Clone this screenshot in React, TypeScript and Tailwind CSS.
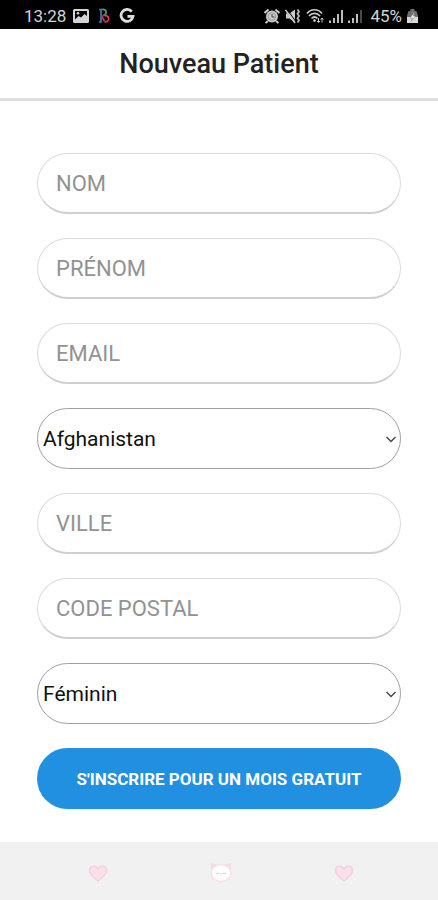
import { useState } from "react";

const fieldBase =
  "block w-full h-[61px] rounded-full border bg-white leading-7 outline-none";

function PictureIcon() {
  return (
    <svg className="w-4 h-4" viewBox="0 0 16 16" aria-hidden="true">
      <path
        fill="#d4d4d4"
        fillRule="evenodd"
        d="M1.500 1h13A1.500 1.500 0 0 1 16 2.500v11a1.500 1.500 0 0 1-1.500 1.500h-13A1.500 1.500 0 0 1 0 13.500v-11A1.500 1.500 0 0 1 1.500 1ZM2 3v8.500l3.500-3.500 2.500 1.500 3.500-3.500 2.500 2V3H2Z"
      />
      <circle cx="5" cy="5.200" r="1.300" fill="#d4d4d4" />
    </svg>
  );
}

function BrandIcon() {
  return (
    <svg className="w-3 h-4" viewBox="0 0 12 16" fill="none" strokeWidth="1.700" aria-hidden="true">
      <path d="M1 1.500h2V14H1" stroke="#3f7fa8" />
      <path d="M3.500 1.500c5.500-1 6 4.500 2 6" stroke="#45a06a" />
      <path d="M5 7.500c6.500-1 8 6.500 1.500 6.700" stroke="#d83a58" />
      <path d="M3.500 7.500l3 6" stroke="#b83a62" />
    </svg>
  );
}

function GoogleIcon() {
  return (
    <svg className="w-4 h-4" viewBox="0 0 16 16" fill="none" aria-hidden="true">
      <path d="M12.800 3.700A6 6 0 1 0 14 8.300H8.500" stroke="#dedede" strokeWidth="2.800" />
    </svg>
  );
}

function AlarmIcon() {
  return (
    <svg className="w-4 h-4" viewBox="0 0 16 16" aria-hidden="true">
      <circle cx="8" cy="8.500" r="6" fill="#c9c9c9" />
      <path
        d="M.500 5 4.500 1.500M15.500 5l-4-3.500M4 13l-2.500 2M12 13l2.500 2"
        stroke="#c9c9c9"
        strokeWidth="2"
      />
      <circle cx="8" cy="8.500" r="3.800" fill="none" stroke="#999" />
      <path d="M8 6v3h2.500" fill="none" stroke="#444" />
    </svg>
  );
}

function MuteIcon() {
  return (
    <svg className="w-4 h-4" viewBox="0 0 16 16" aria-hidden="true">
      <path d="M1 5.500h3.500L10 1.500v13l-5.500-4H1Z" fill="#c9c9c9" />
      <path d="M2 1l9 13" stroke="#000" strokeWidth="1" />
      <path d="M.500 2l9.500 13" stroke="#c9c9c9" strokeWidth="1.500" />
      <path
        d="M12.500 1.500l1.500 2-1.500 2.300 1.500 2.200-1.500 2.300 1.500 2.200-1.500 2"
        fill="none"
        stroke="#b5b5b5"
        strokeWidth="1.800"
      />
    </svg>
  );
}

function WifiIcon() {
  return (
    <svg className="w-[18px] h-4" viewBox="0 0 18 16" fill="none" stroke="#c9c9c9" aria-hidden="true">
      <path d="M1 5.500c4-5 11-5 15 0M3 8c3-3.500 8-3.500 11 0M5.500 10.500c2-2 4-2 6 0" strokeWidth="1.700" />
      <circle cx="8.500" cy="12.500" r="1" fill="#c9c9c9" />
      <path d="M12.500 10v4.500M11 13l1.500 1.500L14 13M16 14.500V10M14.500 11.500 16 10l1.500 1.500" strokeWidth="1" />
    </svg>
  );
}

function SignalIcon({ weak = false }: { weak?: boolean }) {
  return (
    <svg className="w-[14px] h-4" viewBox="0 0 14 16" fill="#bdbdbd" aria-hidden="true">
      <path d="M0 12.500h2V15H0ZM4 10h2v5H4ZM8 6h2v9H8Z" />
      <path d="M12 2h2v13h-2Z" fill={weak ? "#4a4a4a" : "#bdbdbd"} />
    </svg>
  );
}

function BatteryIcon() {
  return (
    <svg className="w-[11px] h-4" viewBox="0 0 11 16" aria-hidden="true">
      <path d="M3.500 1h4v2h2L11 8v7H0V8l1.500-5h2Z" fill="#6f6f6f" />
      <path d="M0 9h11v6H0Z" fill="#d9d9d9" />
      <path d="M7.500 4 3 10h2.500L4 13.500 8.500 8H6.500Z" fill="#f4f4f4" stroke="#777" strokeWidth=".5" />
    </svg>
  );
}

function HeartIcon() {
  return (
    <svg className="w-6 h-6" viewBox="0 0 24 24" aria-hidden="true">
      <path
        d="M12 20C8 16.500 3.500 14 3.500 9.500c0-5 6-6 8.500-1.500C14.500 3.500 20.500 4.500 20.500 9.500c0 4.500-4.500 7-8.500 10.500Z"
        fill="#f9e0ea"
        stroke="#f4d0de"
        strokeWidth="1.300"
      />
    </svg>
  );
}

function CatIcon() {
  return (
    <svg className="w-6 h-6" viewBox="0 0 24 24" fill="none" aria-hidden="true">
      <path d="M2 2.500 7.500 4 3 8.500ZM22 2.500 16.500 4 21 8.500Z" fill="#f7dbe2" stroke="#f5dce3" />
      <ellipse cx="12" cy="12" rx="10" ry="8.500" fill="#fffdfd" stroke="#f5e0e5" strokeWidth="1.300" />
      <path d="M7 12c1 1 2 1 3 0M14 12c1 1 2 1 3 0M11 12.500l1 1 1-1" stroke="#cdc7c9" />
    </svg>
  );
}

function TextField({ id, label, type = "text" }: { id: string; label: string; type?: string }) {
  return (
    <input
      id={id}
      name={id}
      type={type}
      aria-label={label}
      placeholder={label}
      className={`${fieldBase} text-[22px] border-[#dcdcdc] border-b-2 border-b-[#cfcfcf] px-[18px] placeholder:text-[#929292]`}
    />
  );
}

type SelectFieldProps = {
  id: string;
  label: string;
  options: string[];
  value: string;
  onChange: (value: string) => void;
};

function SelectField({ id, label, options, value, onChange }: SelectFieldProps) {
  return (
    <div className="relative">
      <select
        id={id}
        name={id}
        aria-label={label}
        value={value}
        onChange={(e) => onChange(e.target.value)}
        className={`${fieldBase} text-[21px] appearance-none border-[#a0a0a0] pl-[5px] pr-6 text-[#111]`}
      >
        {options.map((option) => (
          <option key={option}>{option}</option>
        ))}
      </select>
      <svg
        className="absolute right-1 top-1/2 w-3 h-3 -translate-y-1/2 pointer-events-none"
        viewBox="0 0 12 12"
        fill="none"
        aria-hidden="true"
      >
        <path d="M1.500 4 6 8.500 10.500 4" stroke="#4a4a4a" strokeWidth="1.500" />
      </svg>
    </div>
  );
}

export default function App() {
  const [country, setCountry] = useState("Afghanistan");
  const [gender, setGender] = useState("Féminin");

  return (
    <div className="flex flex-col min-h-screen bg-white font-[Roboto,sans-serif]">
      {/* Status bar */}
      <div className="flex items-center justify-between h-[29px] pt-[3px] pl-6 pr-5 bg-black text-[#d4d4d4] text-[17px] leading-5">
        <div className="flex items-center">
          <span>13:28</span>
          <div className="flex items-center gap-[9px] ml-[7px]">
            <PictureIcon />
            <BrandIcon />
            <GoogleIcon />
          </div>
        </div>
        <div className="flex items-center gap-[5px]">
          <AlarmIcon />
          <MuteIcon />
          <WifiIcon />
          <SignalIcon />
          <SignalIcon weak />
          <span className="ml-[3px]">45%</span>
          <BatteryIcon />
        </div>
      </div>

      {/* Header */}
      <header className="flex items-center justify-center h-[72px] border-b-[3px] border-[#dedede]">
        <h1 className="text-[27px] leading-8 font-medium text-[#222]">Nouveau Patient</h1>
      </header>

      {/* Form */}
      <main className="flex-1 px-[37px] pt-[52px] pb-[33px]">
        <form className="flex flex-col gap-6" onSubmit={(e) => e.preventDefault()}>
          <TextField id="nom" label="NOM" />
          <TextField id="prenom" label="PRÉNOM" />
          <TextField id="email" label="EMAIL" type="email" />
          <SelectField
            id="pays"
            label="Pays"
            options={["Afghanistan", "Belgique", "Canada", "France", "Suisse"]}
            value={country}
            onChange={setCountry}
          />
          <TextField id="ville" label="VILLE" />
          <TextField id="code-postal" label="CODE POSTAL" />
          <SelectField
            id="sexe"
            label="Sexe"
            options={["Féminin", "Masculin"]}
            value={gender}
            onChange={setGender}
          />
          <button
            type="submit"
            className="w-full h-[61px] rounded-full bg-[#2190e0] text-white text-[17px] leading-6 font-bold"
          >
            S'INSCRIRE POUR UN MOIS GRATUIT
          </button>
        </form>
      </main>

      {/* Bottom navigation */}
      <nav className="grid grid-cols-3 h-[58px] pt-1 pl-[37px] pr-[33px] bg-[#f1f1f1]">
        <button type="button" aria-label="Favoris" className="flex items-center justify-center">
          <HeartIcon />
        </button>
        <button type="button" aria-label="Accueil" className="flex items-center justify-center">
          <CatIcon />
        </button>
        <button type="button" aria-label="Suivi" className="flex items-center justify-center">
          <HeartIcon />
        </button>
      </nav>
    </div>
  );
}
